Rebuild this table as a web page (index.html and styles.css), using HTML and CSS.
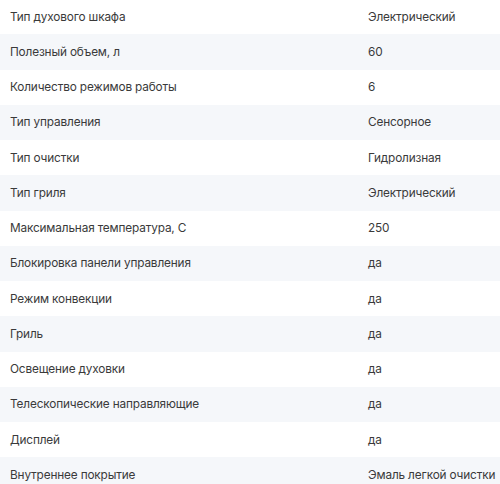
FILE: index.html
```html
<!DOCTYPE html>
<html lang="ru">
<head>
<meta charset="utf-8">
<link rel="stylesheet" href="styles.css">
</head>
<body>
<div class="specs">
  <div class="row"><div class="k">Тип духового шкафа</div><div class="v">Электрический</div></div>
  <div class="row"><div class="k">Полезный объем, л</div><div class="v">60</div></div>
  <div class="row"><div class="k">Количество режимов работы</div><div class="v">6</div></div>
  <div class="row"><div class="k">Тип управления</div><div class="v">Сенсорное</div></div>
  <div class="row"><div class="k">Тип очистки</div><div class="v">Гидролизная</div></div>
  <div class="row"><div class="k">Тип гриля</div><div class="v">Электрический</div></div>
  <div class="row"><div class="k">Максимальная температура, С</div><div class="v">250</div></div>
  <div class="row"><div class="k">Блокировка панели управления</div><div class="v">да</div></div>
  <div class="row"><div class="k">Режим конвекции</div><div class="v">да</div></div>
  <div class="row"><div class="k">Гриль</div><div class="v">да</div></div>
  <div class="row"><div class="k">Освещение духовки</div><div class="v">да</div></div>
  <div class="row"><div class="k">Телескопические направляющие</div><div class="v">да</div></div>
  <div class="row"><div class="k">Дисплей</div><div class="v">да</div></div>
  <div class="row"><div class="k">Внутреннее покрытие</div><div class="v">Эмаль легкой очистки</div></div>
</div>
</body>
</html>
```
FILE: styles.css
```css
html, body { margin: 0; padding: 0; background: #fff; }
body { font-family: Inter, "Noto Sans", sans-serif; font-size: 11.8px; letter-spacing: -0.15px; color: #3a3a3a; }
.specs { margin-top: -1px; }
.row { display: grid; grid-template-columns: 358px 1fr; height: 35.25px; align-items: center; }
.row:nth-child(even) { background: #f5f7fa; }
.k, .v { padding-left: 10px; white-space: nowrap; }
```
